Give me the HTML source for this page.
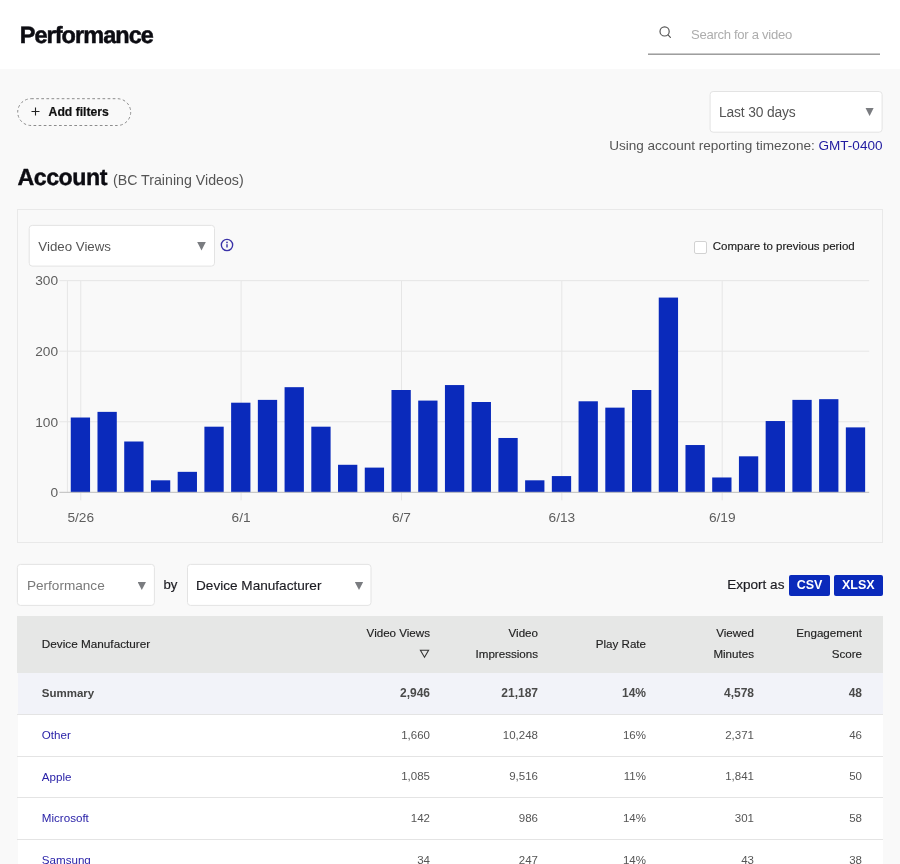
<!DOCTYPE html>
<html lang="en"><head><meta charset="utf-8"><title>Performance</title>
<style>
*{box-sizing:border-box;margin:0;padding:0}
html,body{width:900px;height:864px;overflow:hidden}
body{will-change:transform;background:#f9f9f9;font-family:"Liberation Sans",Arial,sans-serif;color:#222;position:relative}
.abs,.abs>*{position:absolute}
div,span,a,h1,h2,svg{position:absolute;white-space:nowrap}
.hdr{left:0;top:0;width:900px;height:69px;background:#fff}
h1{left:19.7px;top:18.7px;font-size:23.5px;line-height:32px;font-weight:700;color:#0c0c12;letter-spacing:-0.95px;-webkit-text-stroke:0.5px #0c0c12;text-rendering:geometricPrecision}
.search-line{left:648px;top:53px;width:232px;height:2px;background:#9e9e9e;border-top:1px solid #c9c9c9}
.search-ph{left:691px;top:24.5px;font-size:13.1px;line-height:20px;color:#adadad;letter-spacing:-0.3px}
.search-ic{left:657px;top:24px}
.pill{left:17px;top:97.5px;width:114px;height:28px}
.pill .plus{left:13.8px;top:9.3px}
.pill .t{left:31.6px;top:4px;font-size:12.2px;line-height:20px;font-weight:700;color:#111;-webkit-text-stroke:0.2px #111}
.st{line-height:20px}
.ar{position:absolute;width:8.6px;height:8.4px;margin-top:-0.4px;margin-left:-0.3px;background:#7a7c80;clip-path:polygon(0 0,100% 0,50% 100%)}
.tz{right:17.5px;top:135.5px;font-size:13.55px;line-height:20px;color:#555}
.tz b{font-weight:400;color:#1f1aa0;position:static}
h2{left:17.4px;top:160.6px;font-size:23.2px;line-height:32px;font-weight:700;color:#0c0c12;letter-spacing:-0.45px;-webkit-text-stroke:0.4px #0c0c12;text-rendering:geometricPrecision}
.sub{left:113px;top:169.5px;font-size:14.2px;line-height:20px;color:#555}
.panel{left:17px;top:209px;width:866px;height:334px;border:1px solid #e9e9e9}
svg.chart{left:17px;top:209px}
.ax{font-family:"Liberation Sans",Arial,sans-serif;font-size:13.7px;fill:#5e5e5e}
.axx{font-family:"Liberation Sans",Arial,sans-serif;font-size:13.7px;fill:#5e5e5e}
.info{left:219.7px;top:238px}
.cb{left:694px;top:240.5px;width:13px;height:13px;background:#fff;border:1px solid #d2d2d2;border-radius:2px}
.cbl{left:712.8px;top:236px;font-size:11.5px;line-height:20px;color:#1a1a1a;-webkit-text-stroke:0.15px #1a1a1a}
.by{left:163.5px;top:575.4px;font-size:13.2px;line-height:20px;color:#1c1c22;-webkit-text-stroke:0.2px #1c1c22}
.exp{left:727.2px;top:575.4px;font-size:13.55px;line-height:20px;color:#1c1c22;-webkit-text-stroke:0.2px #1c1c22}
.btn{top:575px;height:20.5px;background:#0a2abb;border-radius:2px;color:#fff;font-size:12.5px;font-weight:700;line-height:20.5px;text-align:center}
.th{left:17px;top:616.3px;width:866px;height:56.4px;background:#e6e7e6}
.th span{font-size:11.6px;line-height:20.8px;color:#222;text-align:right;-webkit-text-stroke:0.15px #222}
.row{left:17px;width:866px}
.row.sum{font-weight:700}
.row .c0{left:24.8px;top:10.8px;font-size:11.6px;line-height:20.8px;color:#2a22a8}
.row.sum .c0{color:#444;font-size:11.5px;top:10px}
.row .n{top:10.6px;font-size:11.5px;line-height:20.8px;color:#555}
.row.sum .n{color:#4a4a4a;font-size:12px;top:10px}
</style></head><body>
<div class="hdr"></div>
<h1>Performance</h1>
<svg class="search-ic" width="16" height="16" viewBox="0 0 16 16"><circle cx="7.6" cy="7.4" r="4.6" fill="none" stroke="#555" stroke-width="1.2"/><line x1="11" y1="10.9" x2="13.4" y2="13.3" stroke="#555" stroke-width="1.2" stroke-linecap="round"/></svg>
<span class="search-ph">Search for a video</span>
<div class="search-line"></div>

<div class="pill"><svg style="left:-1px;top:-1px" width="118" height="32"><rect x="1.7" y="1.7" width="113" height="26.8" rx="13.4" fill="none" stroke="#8c8c8c" stroke-width="1" stroke-dasharray="2.7 2.4"/></svg><svg class="plus" width="9" height="9" viewBox="0 0 9 9"><path d="M4.5 0.5V8.5M0.5 4.5H8.5" stroke="#222" stroke-width="1.1" fill="none"/></svg><span class="t">Add filters</span></div>

<svg style="left:709px;top:90px" width="176" height="45"><rect x="1.10" y="1.50" width="172.0" height="40.7" rx="3" fill="#fff" stroke="#e3e3e3" stroke-width="1"/></svg><span class="st" style="left:719px;top:103.1px;color:#555;font-size:13.8px;letter-spacing:-0.15px">Last 30 days</span><i class="ar" style="left:865.6px;top:108.0px"></i>
<div class="tz">Using account reporting timezone: <b>GMT-0400</b></div>

<h2>Account</h2><span class="sub">(BC Training Videos)</span>

<div class="panel"></div>
<svg class="chart" width="866" height="334" viewBox="17 209 866 334">
<line x1="59.400000000000006" y1="421.75" x2="869.2" y2="421.75" stroke="#e6e6e6" stroke-width="1"/>
<line x1="59.400000000000006" y1="351.20" x2="869.2" y2="351.20" stroke="#e6e6e6" stroke-width="1"/>
<line x1="59.400000000000006" y1="280.65" x2="869.2" y2="280.65" stroke="#e6e6e6" stroke-width="1"/>
<line x1="80.76" y1="280.65" x2="80.76" y2="500.30" stroke="#e6e6e6" stroke-width="1"/>
<line x1="241.12" y1="280.65" x2="241.12" y2="500.30" stroke="#e6e6e6" stroke-width="1"/>
<line x1="401.48" y1="280.65" x2="401.48" y2="500.30" stroke="#e6e6e6" stroke-width="1"/>
<line x1="561.84" y1="280.65" x2="561.84" y2="500.30" stroke="#e6e6e6" stroke-width="1"/>
<line x1="722.20" y1="280.65" x2="722.20" y2="500.30" stroke="#e6e6e6" stroke-width="1"/>
<line x1="67.4" y1="280.65" x2="67.4" y2="492.30" stroke="#e6e6e6" stroke-width="1"/>
<rect x="70.76" y="417.52" width="19.3" height="74.78" fill="#0a2abb"/>
<rect x="97.49" y="411.87" width="19.3" height="80.43" fill="#0a2abb"/>
<rect x="124.22" y="441.50" width="19.3" height="50.80" fill="#0a2abb"/>
<rect x="150.94" y="480.31" width="19.3" height="11.99" fill="#0a2abb"/>
<rect x="177.67" y="471.84" width="19.3" height="20.46" fill="#0a2abb"/>
<rect x="204.40" y="426.69" width="19.3" height="65.61" fill="#0a2abb"/>
<rect x="231.12" y="402.70" width="19.3" height="89.60" fill="#0a2abb"/>
<rect x="257.85" y="399.88" width="19.3" height="92.42" fill="#0a2abb"/>
<rect x="284.58" y="387.18" width="19.3" height="105.12" fill="#0a2abb"/>
<rect x="311.30" y="426.69" width="19.3" height="65.61" fill="#0a2abb"/>
<rect x="338.03" y="464.79" width="19.3" height="27.51" fill="#0a2abb"/>
<rect x="364.76" y="467.61" width="19.3" height="24.69" fill="#0a2abb"/>
<rect x="391.48" y="390.00" width="19.3" height="102.30" fill="#0a2abb"/>
<rect x="418.21" y="400.59" width="19.3" height="91.72" fill="#0a2abb"/>
<rect x="444.94" y="385.06" width="19.3" height="107.24" fill="#0a2abb"/>
<rect x="471.66" y="402.00" width="19.3" height="90.30" fill="#0a2abb"/>
<rect x="498.39" y="437.98" width="19.3" height="54.32" fill="#0a2abb"/>
<rect x="525.12" y="480.31" width="19.3" height="11.99" fill="#0a2abb"/>
<rect x="551.84" y="476.07" width="19.3" height="16.23" fill="#0a2abb"/>
<rect x="578.57" y="401.29" width="19.3" height="91.01" fill="#0a2abb"/>
<rect x="605.30" y="407.64" width="19.3" height="84.66" fill="#0a2abb"/>
<rect x="632.02" y="390.00" width="19.3" height="102.30" fill="#0a2abb"/>
<rect x="658.75" y="297.58" width="19.3" height="194.72" fill="#0a2abb"/>
<rect x="685.48" y="445.03" width="19.3" height="47.27" fill="#0a2abb"/>
<rect x="712.20" y="477.48" width="19.3" height="14.82" fill="#0a2abb"/>
<rect x="738.93" y="456.32" width="19.3" height="35.98" fill="#0a2abb"/>
<rect x="765.66" y="421.04" width="19.3" height="71.26" fill="#0a2abb"/>
<rect x="792.38" y="399.88" width="19.3" height="92.42" fill="#0a2abb"/>
<rect x="819.11" y="399.17" width="19.3" height="93.13" fill="#0a2abb"/>
<rect x="845.84" y="427.39" width="19.3" height="64.91" fill="#0a2abb"/>
<line x1="59.400000000000006" y1="492.3" x2="869.2" y2="492.3" stroke="#bcbcbc" stroke-width="1"/>
<text x="58" y="497.10" text-anchor="end" class="ax">0</text>
<text x="58" y="426.55" text-anchor="end" class="ax">100</text>
<text x="58" y="356.00" text-anchor="end" class="ax">200</text>
<text x="58" y="285.45" text-anchor="end" class="ax">300</text>
<text x="80.76" y="522" text-anchor="middle" class="axx">5/26</text>
<text x="241.12" y="522" text-anchor="middle" class="axx">6/1</text>
<text x="401.48" y="522" text-anchor="middle" class="axx">6/7</text>
<text x="561.84" y="522" text-anchor="middle" class="axx">6/13</text>
<text x="722.20" y="522" text-anchor="middle" class="axx">6/19</text>
</svg>
<svg style="left:28px;top:224px" width="190" height="45"><rect x="1.20" y="1.40" width="185.3" height="40.7" rx="3" fill="#fff" stroke="#e3e3e3" stroke-width="1"/></svg><span class="st" style="left:38.3px;top:237.2px;color:#555;font-size:13.3px;">Video Views</span><i class="ar" style="left:197.5px;top:242.5px"></i>
<svg class="info" width="14" height="14" viewBox="0 0 14 14"><circle cx="7" cy="7" r="5.65" fill="none" stroke="#3a32a8" stroke-width="1.35"/><circle cx="7" cy="4.4" r="0.85" fill="#3a32a8"/><rect x="6.3" y="6.2" width="1.4" height="3.3" fill="#3a32a8"/></svg>
<div class="cb"></div><span class="cbl">Compare to previous period</span>

<svg style="left:16px;top:563px" width="141" height="45"><rect x="1.40" y="1.40" width="137.0" height="41.0" rx="3" fill="#fff" stroke="#e3e3e3" stroke-width="1"/></svg><span class="st" style="left:26.9px;top:576.4px;color:#7a7a7a;font-size:13.6px;">Performance</span><i class="ar" style="left:137.8px;top:582.1px"></i>
<span class="by">by</span>
<svg style="left:186px;top:563px" width="188" height="45"><rect x="1.50" y="1.40" width="183.5" height="41.0" rx="3" fill="#fff" stroke="#e3e3e3" stroke-width="1"/></svg><span class="st" style="left:196px;top:576.4px;color:#1c1c22;font-size:13.6px;-webkit-text-stroke:0.15px #1c1c22">Device Manufacturer</span><i class="ar" style="left:355px;top:582.1px"></i>
<span class="exp">Export as</span>
<div class="btn" style="left:789px;width:41px">CSV</div>
<div class="btn" style="left:834px;width:48.7px">XLSX</div>

<div class="th">
<span style="left:24.8px;top:17.5px;font-size:11.75px">Device Manufacturer</span>
<span style="right:453px;top:7px">Video Views</span>
<svg style="left:402px;top:32.5px" width="11" height="10" viewBox="0 0 11 10"><path d="M1.4 1.3H9.6L5.5 8.2Z" fill="none" stroke="#333" stroke-width="1.05" stroke-linejoin="miter"/></svg>
<span style="right:345px;top:7px">Video</span><span style="right:345px;top:28px">Impressions</span>
<span style="right:237px;top:17.5px">Play Rate</span>
<span style="right:129px;top:7px">Viewed</span><span style="right:129px;top:28px">Minutes</span>
<span style="right:21px;top:7px">Engagement</span><span style="right:21px;top:28px">Score</span>
</div>
<div class="tbody" style="left:18px;top:672.7px;width:865px;height:193.29999999999995px;background:#fff"></div>
<div class="sumbg" style="left:18px;top:672.7px;width:865px;height:41.6px;background:#f2f3f9"></div>
<div style="left:17px;top:714px;width:866px;height:1px;background:#e4e4e4"></div>
<div style="left:17px;top:756px;width:866px;height:1px;background:#e4e4e4"></div>
<div style="left:17px;top:797px;width:866px;height:1px;background:#e4e4e4"></div>
<div style="left:17px;top:839px;width:866px;height:1px;background:#e4e4e4"></div>
<div class="row sum" style="top:672.7px;height:41.6px"><span class="c0">Summary</span><span class="n" style="right:453px">2,946</span><span class="n" style="right:345px">21,187</span><span class="n" style="right:237px">14%</span><span class="n" style="right:129px">4,578</span><span class="n" style="right:21px">48</span></div>
<div class="row" style="top:714.3px;height:41.6px"><a class="c0">Other</a><span class="n" style="right:453px">1,660</span><span class="n" style="right:345px">10,248</span><span class="n" style="right:237px">16%</span><span class="n" style="right:129px">2,371</span><span class="n" style="right:21px">46</span></div>
<div class="row" style="top:755.9px;height:41.6px"><a class="c0">Apple</a><span class="n" style="right:453px">1,085</span><span class="n" style="right:345px">9,516</span><span class="n" style="right:237px">11%</span><span class="n" style="right:129px">1,841</span><span class="n" style="right:21px">50</span></div>
<div class="row" style="top:797.5px;height:41.6px"><a class="c0">Microsoft</a><span class="n" style="right:453px">142</span><span class="n" style="right:345px">986</span><span class="n" style="right:237px">14%</span><span class="n" style="right:129px">301</span><span class="n" style="right:21px">58</span></div>
<div class="row" style="top:839.1px;height:41.6px"><a class="c0">Samsung</a><span class="n" style="right:453px">34</span><span class="n" style="right:345px">247</span><span class="n" style="right:237px">14%</span><span class="n" style="right:129px">43</span><span class="n" style="right:21px">38</span></div>
</body></html>
